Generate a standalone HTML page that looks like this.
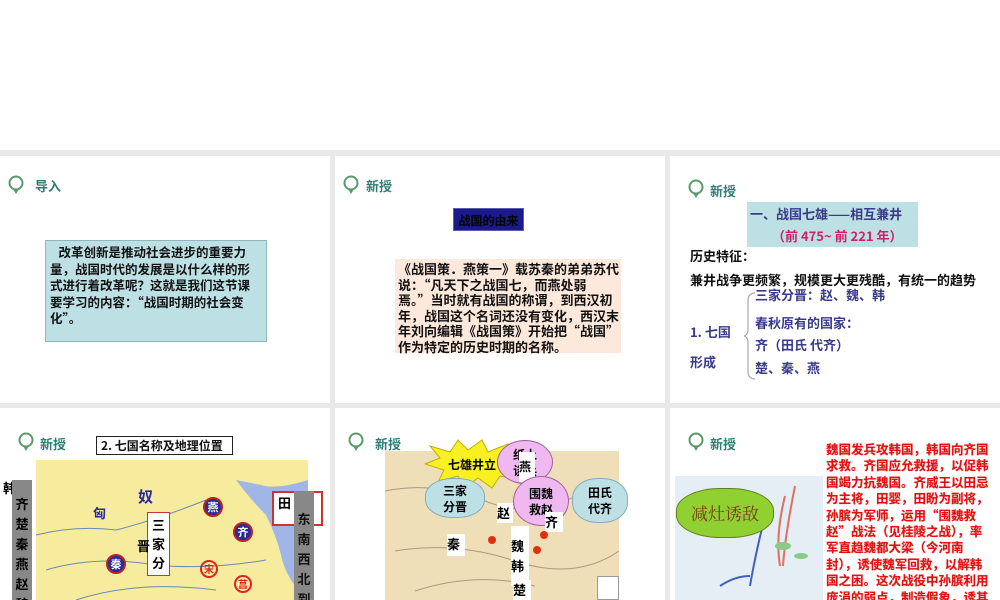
<!DOCTYPE html>
<html><head><meta charset="utf-8"><style>
*{margin:0;padding:0;box-sizing:border-box}
body{width:1000px;height:600px;background:#fff;position:relative;overflow:hidden;font-family:"Noto Sans CJK SC","Liberation Sans",sans-serif;font-weight:bold}
.bg{position:absolute;left:0;top:150px;width:1000px;height:450px;background:#e9e9e9}
.p{position:absolute;background:#fff;overflow:hidden}
.a{position:absolute;white-space:nowrap}
.hd{position:absolute;color:#2e7d73;font-size:13px;line-height:16px}
.pin{position:absolute;width:20px;height:20px}
</style></head><body>
<div class="bg"></div>

<!-- panel 1 -->
<div class="p" style="left:0;top:156px;width:330px;height:247px">
 <svg class="pin" style="left:6px;top:19px" viewBox="0 0 20 20"><circle cx="10" cy="8" r="6.5" fill="none" stroke="#5a9a6a" stroke-width="2"/><path d="M7 14 L10 19 L13 14 Z" fill="#5a9a6a"/></svg>
 <div class="hd" style="left:35px;top:22px">导入</div>
 <div class="a" style="left:45px;top:84px;width:222px;height:102px;background:#bde0e4;border:1px solid #8fb6ba;font-size:12.5px;line-height:16.5px;padding:3px 4px;color:#111">&nbsp;&nbsp;&nbsp;改革创新是推动社会进步的重要力<br>量，战国时代的发展是以什么样的形<br>式进行着改革呢？这就是我们这节课<br>要学习的内容：“战国时期的社会变<br>化”。</div>
</div>

<!-- panel 2 -->
<div class="p" style="left:335px;top:156px;width:330px;height:247px">
 <svg class="pin" style="left:6px;top:19px" viewBox="0 0 20 20"><circle cx="10" cy="8" r="6.5" fill="none" stroke="#5a9a6a" stroke-width="2"/><path d="M7 14 L10 19 L13 14 Z" fill="#5a9a6a"/></svg>
 <div class="hd" style="left:31px;top:22px">新授</div>
 <div class="a" style="left:118px;top:52px;width:71px;height:23px;background:#1a1a8a;color:#000;font-size:12px;line-height:23px;text-align:center;border:1px solid #5a5ab0">战国的由来</div>
 <div class="a" style="left:60px;top:103px;width:226px;height:94px;background:#fde9dc;font-size:13px;line-height:15.6px;padding:2px 3px;color:#111">《战国策．燕策一》载苏秦的弟弟苏代<br>说：“凡天下之战国七，而燕处弱<br>焉。”当时就有战国的称谓，到西汉初<br>年，战国这个名词还没有变化，西汉末<br>年刘向编辑《战国策》开始把“战国”<br>作为特定的历史时期的名称。</div>
</div>

<!-- panel 3 -->
<div class="p" style="left:670px;top:156px;width:330px;height:247px">
 <svg class="pin" style="left:16px;top:23px" viewBox="0 0 20 20"><circle cx="10" cy="8" r="6.5" fill="none" stroke="#5a9a6a" stroke-width="2"/><path d="M7 14 L10 19 L13 14 Z" fill="#5a9a6a"/></svg>
 <div class="hd" style="left:40px;top:27px">新授</div>
 <div class="a" style="left:77px;top:46px;width:171px;height:45px;background:#bde0e4"></div>
 <div class="a" style="left:80px;top:48px;font-size:13px;color:#3a3a8a">一、战国七雄——相互兼井</div>
 <div class="a" style="left:102px;top:70px;font-size:13px;color:#d0206a">（前 475~ 前 221 年）</div>
 <div class="a" style="left:20px;top:90px;font-size:13px;color:#111">历史特征：</div>
 <div class="a" style="left:20px;top:114px;font-size:13px;color:#111">兼井战争更频繁，规模更大更残酷，有统一的趋势</div>
 <svg class="a" style="left:74px;top:135px" width="12" height="90"><path d="M11 2 Q4 2 4 10 L4 38 Q4 44 0 45 Q4 46 4 52 L4 80 Q4 88 11 88" fill="none" stroke="#999" stroke-width="1"/></svg>
 <div class="a" style="left:85px;top:129px;font-size:13px;color:#3a3a8a">三家分晋：赵、魏、韩</div>
 <div class="a" style="left:85px;top:157px;font-size:13px;color:#3a3a8a">春秋原有的国家：</div>
 <div class="a" style="left:85px;top:179px;font-size:13px;color:#3a3a8a">齐（田氏 代齐）</div>
 <div class="a" style="left:85px;top:202px;font-size:13px;color:#3a3a8a">楚、秦、燕</div>
 <div class="a" style="left:20px;top:166px;font-size:13px;color:#3a3a8a">1. 七国</div>
 <div class="a" style="left:20px;top:196px;font-size:13px;color:#3a3a8a">形成</div>
</div>

<!-- panel 4 -->
<div class="p" style="left:0;top:408px;width:330px;height:192px">
 <svg class="pin" style="left:16px;top:24px" viewBox="0 0 20 20"><circle cx="10" cy="8" r="6.5" fill="none" stroke="#5a9a6a" stroke-width="2"/><path d="M7 14 L10 19 L13 14 Z" fill="#5a9a6a"/></svg>
 <div class="hd" style="left:40px;top:28px">新授</div>
 <div class="a" style="left:96px;top:28px;width:137px;height:19px;border:1px solid #222;font-size:12px;line-height:17px;padding-left:4px;color:#111">2. 七国名称及地理位置</div>
 <div class="a" style="left:36px;top:52px;width:272px;height:140px;background:#f7eb9e"></div>
 <svg class="a" style="left:36px;top:52px" width="272" height="140"><path d="M200 20 Q215 40 230 55 Q240 75 245 95 Q250 120 272 140 L272 20 Q240 30 225 25 Z" fill="#9fb6e6"/><path d="M0 75 Q40 65 80 70 Q120 60 170 40 M10 110 Q60 95 120 105 Q170 110 230 100 M40 140 Q100 120 180 130" stroke="#6a8ab0" fill="none"/></svg>
 <div class="a" style="left:138px;top:78px;font-size:15px;color:#2a2a9a">奴</div>
 <div class="a" style="left:93px;top:95px;font-size:13px;color:#2a2a9a">匈</div>
 <div class="a" style="left:203px;top:89px;width:20px;height:20px;border-radius:50%;background:#2a2a9a;border:2px solid #b22;color:#fff;font-size:11px;text-align:center;line-height:16px">燕</div>
 <div class="a" style="left:233px;top:114px;width:20px;height:20px;border-radius:50%;background:#2a2a9a;border:2px solid #b22;color:#fff;font-size:11px;text-align:center;line-height:16px">齐</div>
 <div class="a" style="left:106px;top:146px;width:20px;height:20px;border-radius:50%;background:#2a2a9a;border:2px solid #b22;color:#fff;font-size:11px;text-align:center;line-height:16px">秦</div>
 <div class="a" style="left:200px;top:152px;width:18px;height:18px;border-radius:50%;border:2px solid #d22;color:#d22;font-size:10px;text-align:center;line-height:14px">宋</div>
 <div class="a" style="left:234px;top:167px;width:18px;height:18px;border-radius:50%;border:2px solid #d22;color:#d22;font-size:10px;text-align:center;line-height:14px">莒</div>
 <div class="a" style="left:147px;top:104px;width:23px;height:64px;background:#fff;border:1px solid #c33;font-size:13px;line-height:19px;text-align:center;padding-top:2px">三<br>家<br>分</div>
 <div class="a" style="left:137px;top:128px;font-size:13px">晋</div>
 <div class="a" style="left:272px;top:83px;width:51px;height:35px;background:#fff;border:2px solid #c33;font-size:13px;padding-left:4px">田</div>
 <div class="a" style="left:294px;top:83px;width:20px;height:115px;background:#888;color:#111;font-size:13px;line-height:20px;text-align:center;padding-top:18px">东<br>南<br>西<br>北<br>到<br>中</div>
 <div class="a" style="left:3px;top:70px;font-size:13px">韩</div>
 <div class="a" style="left:12px;top:72px;width:20px;height:125px;background:#888;font-size:13px;line-height:20px;text-align:center;padding-top:14px">齐<br>楚<br>秦<br>燕<br>赵<br>魏</div>
</div>

<!-- panel 5 -->
<div class="p" style="left:335px;top:408px;width:330px;height:192px">
 <svg class="pin" style="left:11px;top:24px" viewBox="0 0 20 20"><circle cx="10" cy="8" r="6.5" fill="none" stroke="#5a9a6a" stroke-width="2"/><path d="M7 14 L10 19 L13 14 Z" fill="#5a9a6a"/></svg>
 <div class="hd" style="left:40px;top:28px">新授</div>
 <div class="a" style="left:50px;top:43px;width:234px;height:149px;background:#efdfb8"></div>
 <svg class="a" style="left:50px;top:43px" width="234" height="149"><path d="M0 40 Q50 30 100 50 T200 40 M10 100 Q70 90 130 110 T234 100 M30 140 Q90 120 150 135" stroke="#a99a80" fill="none"/></svg>
 <svg class="a" style="left:85px;top:30px" width="110" height="52"><polygon points="5,26 20,20 10,8 30,14 38,2 48,12 62,2 68,14 88,6 84,18 105,22 88,30 100,42 80,38 72,50 58,40 44,50 38,38 18,44 24,32" fill="#f8f020" stroke="#c0b000"/><text x="28" y="31" font-size="12" font-weight="bold" font-family="Noto Sans CJK SC,sans-serif">七雄井立</text></svg>
 <div class="a" style="left:162px;top:32px;width:56px;height:44px;border-radius:50%;background:#f0b8f0;border:1px solid #a060a0;font-size:12px;text-align:center;line-height:16px;padding-top:6px">纸上<br>谈兵</div>
 <div class="a" style="left:184px;top:44px;width:16px;height:30px;background:#fff;font-size:12px;padding-top:6px">燕</div>
 <div class="a" style="left:178px;top:68px;width:56px;height:50px;border-radius:50%;background:#f0b8f0;border:1px solid #a060a0;font-size:12px;text-align:center;line-height:16px;padding-top:9px">围魏<br>救赵</div>
 <div class="a" style="left:90px;top:70px;width:60px;height:40px;border-radius:45%;background:#bde0e4;border:1px solid #8ab;font-size:12px;text-align:center;line-height:16px;padding-top:4px">三家<br>分晋</div>
 <div class="a" style="left:237px;top:70px;width:56px;height:45px;border-radius:45%;background:#bde0e4;border:1px solid #8ab;font-size:12px;text-align:center;line-height:16px;padding-top:6px">田氏<br>代齐</div>
 <div class="a" style="left:162px;top:95px;width:16px;height:20px;background:#fff;font-size:13px">赵</div>
 <div class="a" style="left:210px;top:104px;width:18px;height:20px;background:#fff;font-size:13px">齐</div>
 <div class="a" style="left:176px;top:118px;width:18px;height:60px;background:#fff;font-size:13px;line-height:20px;padding-top:10px">魏<br>韩</div>
 <div class="a" style="left:112px;top:126px;width:18px;height:22px;background:#fff;font-size:13px">秦</div>
 <div class="a" style="left:178px;top:172px;width:18px;height:20px;background:#fff;font-size:13px">楚</div>
 <div class="a" style="left:153px;top:128px;width:8px;height:8px;border-radius:50%;background:#e03010"></div>
 <div class="a" style="left:198px;top:138px;width:8px;height:8px;border-radius:50%;background:#e03010"></div>
 <div class="a" style="left:205px;top:123px;width:8px;height:8px;border-radius:50%;background:#e03010"></div>
 <div class="a" style="left:262px;top:168px;width:22px;height:24px;background:#fff;border:1px solid #999"></div>
</div>

<!-- panel 6 -->
<div class="p" style="left:670px;top:408px;width:330px;height:192px">
 <svg class="pin" style="left:16px;top:24px" viewBox="0 0 20 20"><circle cx="10" cy="8" r="6.5" fill="none" stroke="#5a9a6a" stroke-width="2"/><path d="M7 14 L10 19 L13 14 Z" fill="#5a9a6a"/></svg>
 <div class="hd" style="left:40px;top:28px">新授</div>
 <div class="a" style="left:5px;top:68px;width:148px;height:124px;background:#e4eef4"></div>
 <svg class="a" style="left:5px;top:68px" width="148" height="124"><path d="M110 20 Q100 60 105 90 M120 10 Q110 60 108 90" stroke="#e07060" stroke-width="2" fill="none"/><path d="M90 40 Q80 80 75 110 M45 110 Q60 100 75 100" stroke="#4060c0" stroke-width="2" fill="none"/><ellipse cx="108" cy="70" rx="8" ry="4" fill="#8c8"/><ellipse cx="126" cy="80" rx="7" ry="3" fill="#8c8"/></svg>
 <div class="a" style="left:6px;top:80px;width:98px;height:50px;border-radius:45%;background:#90d030;border:1px solid #608020;font-size:17px;font-weight:normal;color:#7a3a1a;font-family:'Noto Serif CJK SC',serif;text-align:center;line-height:48px">减灶诱敌</div>
 <div class="a" style="left:156px;top:33px;width:174px;font-size:12.5px;line-height:16.4px;color:#e01010;text-shadow:0 0 1px #f88">魏国发兵攻韩国，韩国向齐国<br>求救。齐国应允救援，以促韩<br>国竭力抗魏国。齐威王以田忌<br>为主将，田婴，田盼为副将，<br>孙膑为军师，运用“围魏救<br>赵”战法（见桂陵之战），率<br>军直趋魏都大梁（今河南<br>封），诱使魏军回救，以解韩<br>国之困。这次战役中孙膑利用<br>庞涓的弱点，制造假象，诱其<br>就范，使战国的的局面上改嫁</div>
</div>
</body></html>
